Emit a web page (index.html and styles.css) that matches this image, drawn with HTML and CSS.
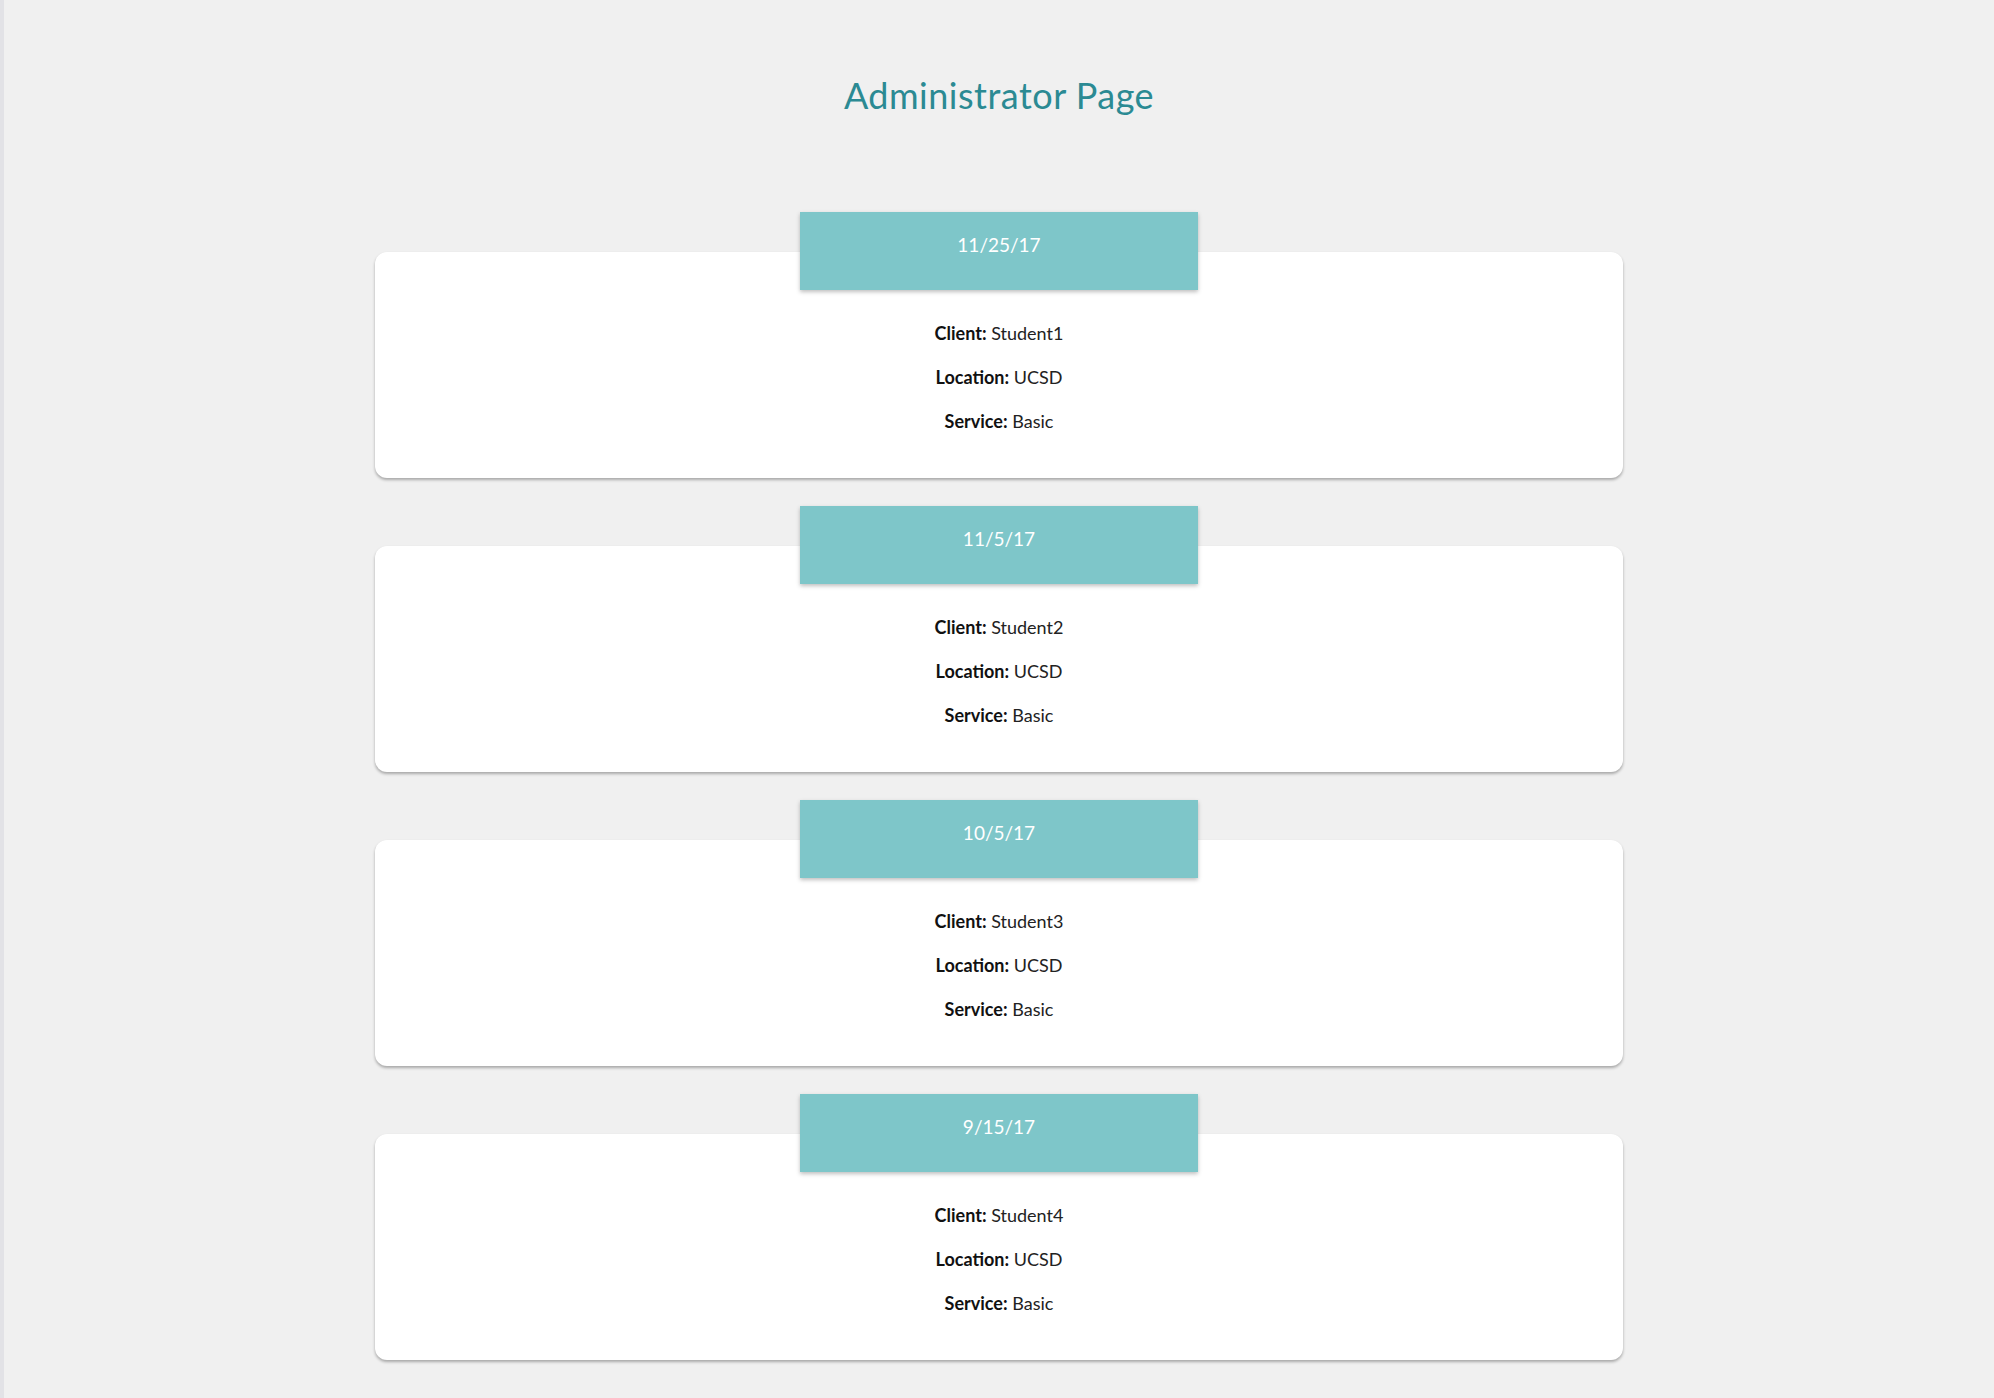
FILE: index.html
```html
<!DOCTYPE html>
<html>
<head>
<meta charset="utf-8">
<title>Administrator Page</title>
<link rel="stylesheet" href="styles.css">
</head>
<body>
<main class="page">
  <h1 class="title">Administrator Page</h1>
  <section class="list">
    <article class="entry">
      <div class="date">11/25/17</div>
      <div class="card">
        <p class="row"><b>Client:</b> Student1</p>
        <p class="row"><b>Location:</b> UCSD</p>
        <p class="row"><b>Service:</b> Basic</p>
      </div>
    </article>
    <article class="entry">
      <div class="date">11/5/17</div>
      <div class="card">
        <p class="row"><b>Client:</b> Student2</p>
        <p class="row"><b>Location:</b> UCSD</p>
        <p class="row"><b>Service:</b> Basic</p>
      </div>
    </article>
    <article class="entry">
      <div class="date">10/5/17</div>
      <div class="card">
        <p class="row"><b>Client:</b> Student3</p>
        <p class="row"><b>Location:</b> UCSD</p>
        <p class="row"><b>Service:</b> Basic</p>
      </div>
    </article>
    <article class="entry">
      <div class="date">9/15/17</div>
      <div class="card">
        <p class="row"><b>Client:</b> Student4</p>
        <p class="row"><b>Location:</b> UCSD</p>
        <p class="row"><b>Service:</b> Basic</p>
      </div>
    </article>
  </section>
</main>
</body>
</html>
```
FILE: styles.css
```css
html, body {
  margin: 0;
  padding: 0;
  background: #f0f0f0;
}
body {
  font-family: "Lato", "Noto Sans", sans-serif;
  color: #111;
  border-left: 4px solid #e2e2e6;
  min-height: 100vh;
  box-sizing: border-box;
}
.page {
  display: flex;
  flex-direction: column;
  align-items: center;
}
.title {
  margin: 73px 0 0;
  font-size: 36px;
  line-height: 44px;
  font-weight: 400;
  color: #2b8a93;
  letter-spacing: 0.5px;
}
.list {
  margin-top: 95px;
  display: flex;
  flex-direction: column;
  gap: 28px;
  width: 1248px;
}
.entry {
  display: flex;
  flex-direction: column;
  align-items: center;
}
.date {
  position: relative;
  z-index: 1;
  width: 398px;
  height: 78px;
  box-sizing: border-box;
  padding-top: 21px;
  margin-bottom: -38px;
  background: #7ec6c9;
  color: #fff;
  text-align: center;
  font-size: 19px;
  line-height: 24px;
  box-shadow: 0 2px 4px rgba(0, 0, 0, 0.25);
}
.card {
  align-self: stretch;
  background: #fff;
  border-radius: 12px;
  box-shadow: 0 2px 3px rgba(0, 0, 0, 0.3);
  padding: 69px 0 45px;
  display: flex;
  flex-direction: column;
  align-items: center;
  gap: 20px;
}
.row {
  margin: 0;
  font-size: 18px;
  line-height: 24px;
  color: #222;
}
.row b {
  font-weight: 700;
  color: #111;
}
```
